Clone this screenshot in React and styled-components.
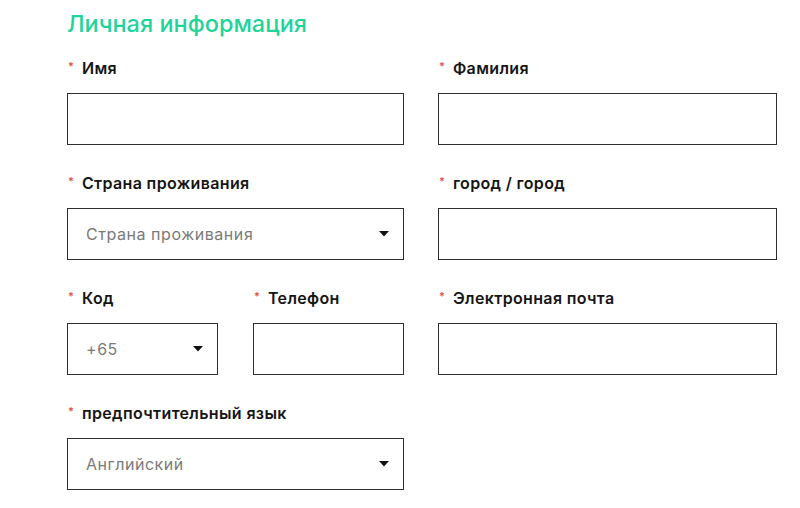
import React from "react";
import styled, { createGlobalStyle } from "styled-components";

const Global = createGlobalStyle`
  html, body { margin: 0; padding: 0; background: #fff; }
  body { font-family: Inter, "Noto Sans", sans-serif; color: #1a1a1a; }
  * { box-sizing: border-box; }
`;

const Page = styled.div`
  width: 800px;
  height: 508px;
  overflow: hidden;
  padding: 9px 0 0 67px;
`;

const Title = styled.h2`
  margin: 0 0 20px;
  font-family: Inter, "Noto Sans", sans-serif;
  font-weight: 500;
  font-size: 23.5px;
  line-height: 30px;
  color: #1fd49b;
`;

const Grid = styled.div`
  display: grid;
  width: 710px;
  grid-template-columns: 337px 1fr;
  column-gap: 34px;
  row-gap: 29px;
`;

const Pair = styled.div`
  display: grid;
  grid-template-columns: 151px 151px;
  column-gap: 35px;
`;

const Field = styled.div`
  display: flex;
  flex-direction: column;
  gap: 14px;
`;

const Label = styled.label`
  display: flex;
  align-items: flex-start;
  height: 20px;
  font-size: 16px;
  font-weight: 600;
  letter-spacing: 0.35px;
  line-height: 19px;
  color: #151515;
  white-space: nowrap;
`;

const Star = styled.span`
  color: #e0524a;
  font-size: 11px;
  line-height: 14px;
  letter-spacing: 0;
  margin: 0 8px 0 1px;
`;

const Input = styled.input`
  display: block;
  width: 100%;
  height: 52px;
  border: 1px solid #2e2e2e;
  border-radius: 0;
  padding: 0 18px;
  font: inherit;
  font-size: 16px;
  background: #fff;
  outline: none;
`;

const Select = styled.div`
  display: flex;
  align-items: center;
  justify-content: space-between;
  height: 52px;
  border: 1px solid #2e2e2e;
  padding: 0 14px 0 18px;
  background: #fff;
  cursor: pointer;
`;

const SelectText = styled.span`
  font-size: 16px;
  letter-spacing: 0.55px;
  color: #7a7a7a;
`;

const Caret = () => (
  <svg width="10" height="6" viewBox="0 0 10 6" aria-hidden="true">
    <path d="M0 0h10L5 5.5z" fill="#111" />
  </svg>
);

const TextField = ({ label }) => (
  <Field>
    <Label><Star>*</Star>{label}</Label>
    <Input type="text" />
  </Field>
);

const SelectField = ({ label, value }) => (
  <Field>
    <Label><Star>*</Star>{label}</Label>
    <Select>
      <SelectText>{value}</SelectText>
      <Caret />
    </Select>
  </Field>
);

export default function App() {
  return (
    <Page>
      <Global />
      <Title>Личная информация</Title>
      <Grid>
        <TextField label="Имя" />
        <TextField label="Фамилия" />
        <SelectField label="Страна проживания" value="Страна проживания" />
        <TextField label="город / город" />
        <Pair>
          <SelectField label="Код" value="+65" />
          <TextField label="Телефон" />
        </Pair>
        <TextField label="Электронная почта" />
        <SelectField label="предпочтительный язык" value="Английский" />
      </Grid>
    </Page>
  );
}
